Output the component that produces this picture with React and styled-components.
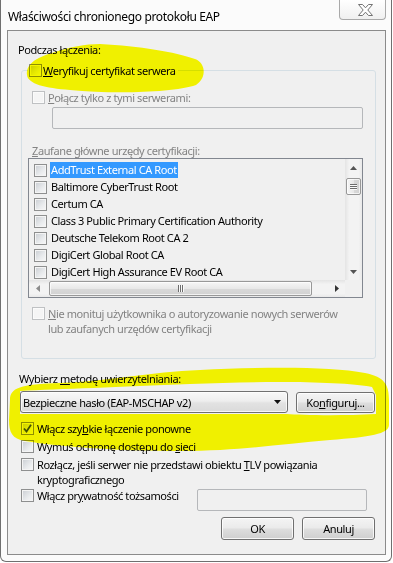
import React from "react";
import styled, { createGlobalStyle } from "styled-components";

const GlobalStyle = createGlobalStyle`
  html, body {
    margin: 0;
    padding: 0;
    background: #ffffff;
  }
  body {
    font-family: "Noto Sans", "Open Sans", sans-serif;
    font-size: 11px;
    letter-spacing: -0.4px;
    color: #000;
  }
`;

const Window = styled.div`
  position: relative;
  width: 392px;
  box-sizing: border-box;
  display: flex;
  flex-direction: column;
  background: #fbfbfb;
  border: 1px solid #6f6f6f;
  border-top: none;
  border-radius: 0 0 6px 6px;
  padding: 0 5px 6px 6px;
`;

const TitleBar = styled.div`
  height: 30px;
  display: flex;
  justify-content: space-between;
  align-items: flex-start;
`;

const Title = styled.div`
  padding: 9px 0 0 1px;
  font-size: 12px;
  line-height: 15px;
  letter-spacing: -0.35px;
`;

const CloseButton = styled.div`
  width: 47px;
  height: 20px;
  box-sizing: border-box;
  display: flex;
  align-items: center;
  justify-content: center;
  padding-left: 6px;
  border: 1px solid #a9a9a9;
  border-top: none;
  border-radius: 0 0 4px 4px;
  background: linear-gradient(#ffffff, #f0f0f0);
`;

const Client = styled.div`
  display: flex;
  flex-direction: column;
  border: 1px solid #8b8b8b;
  background: #f0f0f0;
  padding: 11px 9px 14px 10px;
`;

const Label = styled.div`
  line-height: 15px;
  white-space: nowrap;
  margin: ${(p) => p.$mt || 0}px 0 0 ${(p) => p.$ml || 0}px;
  color: ${(p) => (p.$disabled ? "#838383" : "#000")};
`;

const Key = styled.span`
  text-decoration: underline;
  text-underline-offset: 1px;
`;

const Group = styled.fieldset`
  margin: 6px 0 0 3px;
  padding: 12px 12px 22px 6px;
  border: 1px solid #d5dfe5;
  border-radius: 3px;
  min-width: 0;
`;

const Legend = styled.legend`
  margin: 0;
  padding: 0 2px 0 1px;
`;

const CheckRow = styled.div`
  display: flex;
  align-items: flex-start;
  gap: ${(p) => p.$gap ?? 3}px;
  line-height: ${(p) => p.$lh}px;
  white-space: nowrap;
  margin: ${(p) => p.$mt || 0}px 0 0 ${(p) => p.$ml || 0}px;
  color: ${(p) => (p.$disabled ? "#838383" : "#000")};
`;

const Box = styled.span`
  flex: none;
  display: flex;
  align-items: center;
  justify-content: center;
  width: 13px;
  height: 13px;
  box-sizing: border-box;
  margin-top: ${(p) => p.$offset}px;
  border: 1px solid ${(p) => (p.$disabled ? "#bfc1c3" : "#8e8f8f")};
  background: ${(p) =>
    p.$disabled
      ? "#f5f5f5"
      : "linear-gradient(135deg, #c9cdd2 0%, #e9ebed 60%, #f8f8f8 100%)"};
  box-shadow: inset 0 0 0 1px ${(p) => (p.$disabled ? "#fbfbfb" : "#f4f4f4")};
`;

const Field = styled.div`
  flex: none;
  width: ${(p) => p.$w}px;
  height: 22px;
  box-sizing: border-box;
  margin: ${(p) => p.$margin};
  border: 1px solid #b5b7ba;
  border-radius: 2px;
  background: #f0f0f0;
`;

const ListBox = styled.div`
  display: grid;
  grid-template-columns: 1fr 17px;
  grid-template-rows: 1fr 17px;
  height: 140px;
  box-sizing: border-box;
  border: 1px solid #828790;
  background: #f0f0f0;
`;

const Items = styled.div`
  padding: 2px 0 0 5px;
  overflow: hidden;
`;

const Item = styled.div`
  display: flex;
  align-items: center;
  gap: 3px;
  height: 17px;
  white-space: nowrap;
`;

const ItemText = styled.span`
  padding: 0 1px;
  line-height: 16px;
  background: ${(p) => (p.$selected ? "#3399ff" : "transparent")};
  color: ${(p) => (p.$selected ? "#ffffff" : "#000")};
`;

const VScroll = styled.div`
  display: flex;
  flex-direction: column;
  align-items: center;
  background: linear-gradient(to right, #e4e4e4, #f3f3f3 25%, #f3f3f3 80%, #e9e9e9);
`;

const HScroll = styled.div`
  display: flex;
  align-items: center;
  background: linear-gradient(#e4e4e4, #f3f3f3 25%, #f3f3f3 80%, #e9e9e9);
`;

const Corner = styled.div`
  background: #f0f0f0;
`;

const ArrowCell = styled.div`
  flex: none;
  width: 17px;
  height: 17px;
  display: flex;
  align-items: center;
  justify-content: center;
  margin-top: ${(p) => (p.$end ? "auto" : "0")};
  margin-left: ${(p) => (p.$push ? "auto" : "0")};
`;

const Thumb = styled.div`
  flex: none;
  box-sizing: border-box;
  display: flex;
  flex-direction: ${(p) => (p.$horizontal ? "row" : "column")};
  align-items: center;
  justify-content: center;
  gap: 1px;
  width: ${(p) => (p.$horizontal ? "263px" : "15px")};
  height: ${(p) => (p.$horizontal ? "15px" : "17px")};
  margin: ${(p) => (p.$horizontal ? "0 0 0 3px" : "2px 0 0 0")};
  border: 1px solid #989898;
  border-radius: 2px;
  background: ${(p) =>
    p.$horizontal
      ? "linear-gradient(#f6f6f6, #e8e8e8 50%, #d9d9d9 51%, #d2d2d2)"
      : "linear-gradient(to right, #f6f6f6, #e8e8e8 50%, #d9d9d9 51%, #d2d2d2)"};
  box-shadow: inset 0 0 0 1px rgba(255, 255, 255, 0.7);
`;

const Grip = styled.span`
  flex: none;
  width: ${(p) => (p.$horizontal ? "1px" : "7px")};
  height: ${(p) => (p.$horizontal ? "7px" : "1px")};
  background: #6d6d6d;
  box-shadow: ${(p) => (p.$horizontal ? "1px 0 0 #fafafa" : "0 1px 0 #fafafa")};
`;

const MethodRow = styled.div`
  display: flex;
  align-items: center;
  margin: 5px 0 0 2px;
`;

const Combo = styled.div`
  width: 268px;
  height: 22px;
  box-sizing: border-box;
  display: flex;
  align-items: center;
  padding: 0 6px 0 2px;
  border: 1px solid #707070;
  border-radius: 3px;
  background: linear-gradient(#f8f8f8, #eeeeee 45%, #e2e2e2 55%, #dadada);
  box-shadow: inset 0 0 0 1px rgba(255, 255, 255, 0.75);
  line-height: 15px;
`;

const ComboText = styled.span`
  flex: 1;
  white-space: nowrap;
`;

const Button = styled.div`
  flex: none;
  width: ${(p) => p.$w}px;
  height: ${(p) => p.$h}px;
  box-sizing: border-box;
  margin-left: ${(p) => p.$ml || 0}px;
  display: flex;
  align-items: center;
  justify-content: center;
  border: 1px solid #707070;
  border-radius: 3px;
  background: linear-gradient(#f4f4f4, #ebebeb 45%, #dddddd 55%, #cfcfcf);
  box-shadow: inset 0 0 0 1px rgba(255, 255, 255, 0.8);
  line-height: 15px;
  white-space: nowrap;
`;

const Options = styled.div`
  display: flex;
  flex-direction: column;
  margin: 9px 0 0 3px;
`;

const OptionLine = styled.div`
  display: flex;
  align-items: flex-start;
  margin-top: ${(p) => p.$mt || 0}px;
`;

const Footer = styled.div`
  display: flex;
  justify-content: flex-end;
  gap: 8px;
  margin-top: 6px;
  padding-right: 1px;
`;

const Marker = styled.svg`
  position: absolute;
  left: -1px;
  top: 0;
  width: 392px;
  height: 562px;
  pointer-events: none;
  mix-blend-mode: multiply;
`;

const certificates = [
  "AddTrust External CA Root",
  "Baltimore CyberTrust Root",
  "Certum CA",
  "Class 3 Public Primary Certification Authority",
  "Deutsche Telekom Root CA 2",
  "DigiCert Global Root CA",
  "DigiCert High Assurance EV Root CA",
];

const Arrow = ({ dir, color = "#555" }) => {
  const shapes = {
    up: ["7", "4", "0,4 3.5,0 7,4"],
    down: ["7", "4", "0,0 7,0 3.5,4"],
    left: ["4", "7", "4,0 4,7 0,3.5"],
    right: ["4", "7", "0,0 4,3.5 0,7"],
  };
  const [w, h, pts] = shapes[dir];
  return (
    <svg width={w} height={h} viewBox={`0 0 ${w} ${h}`}>
      <polygon points={pts} fill={color} />
    </svg>
  );
};

const Check = ({ checked, disabled, lh }) => (
  <Box $disabled={disabled} $offset={Math.min(lh - 13, 2) / 2}>
    {checked && (
      <svg width="9" height="9" viewBox="0 0 9 9">
        <path d="M1 4.5 L3.5 7.5 L8 0.8" fill="none" stroke="#42526a" strokeWidth="1.8" />
      </svg>
    )}
  </Box>
);

const CheckOption = ({ children, checked, disabled, lh = 15, gap, mt, ml }) => (
  <CheckRow $lh={lh} $gap={gap} $mt={mt} $ml={ml} $disabled={disabled}>
    <Check checked={checked} disabled={disabled} lh={lh} />
    <span>{children}</span>
  </CheckRow>
);

const App = () => {
  return (
    <>
      <GlobalStyle />
      <Window>
        <TitleBar>
          <Title>Właściwości chronionego protokołu EAP</Title>
          <CloseButton>
            <svg width="15" height="12" viewBox="0 0 15 12">
              <polygon
                points="0.5,0.5 4.5,0.5 7.5,3.8 10.5,0.5 14.5,0.5 9.8,6 14.5,11.5 10.5,11.5 7.5,8.2 4.5,11.5 0.5,11.5 5.2,6"
                fill="#ffffff"
                stroke="#737373"
              />
            </svg>
          </CloseButton>
        </TitleBar>

        <Client>
          <Label>Podczas łączenia:</Label>

          <Group>
            <Legend>
              <CheckOption gap={1}>
                <Key>W</Key>eryfikuj certyfikat serwera
              </CheckOption>
            </Legend>

            <CheckOption disabled ml={4}>
              <Key>P</Key>ołącz tylko z tymi serwerami:
            </CheckOption>
            <Field $w={311} $margin="2px 0 0 24px" />

            <Label $mt={14} $ml={4} $disabled>
              <Key>Z</Key>aufane główne urzędy certyfikacji:
            </Label>

            <ListBox>
              <Items>
                {certificates.map((name, i) => (
                  <Item key={name}>
                    <Check lh={17} />
                    <ItemText $selected={i === 0}>{name}</ItemText>
                  </Item>
                ))}
              </Items>
              <VScroll>
                <ArrowCell>
                  <Arrow dir="up" />
                </ArrowCell>
                <Thumb>
                  <Grip />
                  <Grip />
                  <Grip />
                </Thumb>
                <ArrowCell $end>
                  <Arrow dir="down" />
                </ArrowCell>
              </VScroll>
              <HScroll>
                <ArrowCell>
                  <Arrow dir="left" color="#8c8c8c" />
                </ArrowCell>
                <Thumb $horizontal>
                  <Grip $horizontal />
                  <Grip $horizontal />
                  <Grip $horizontal />
                </Thumb>
                <ArrowCell $push>
                  <Arrow dir="right" color="#333" />
                </ArrowCell>
              </HScroll>
              <Corner />
            </ListBox>

            <CheckOption disabled mt={8} ml={4}>
              <Key>N</Key>ie monituj użytkownika o autoryzowanie nowych serwerów
              <br />
              lub zaufanych urzędów certyfikacji
            </CheckOption>
          </Group>

          <Label $mt={12} $ml={1}>
            Wybierz <Key>m</Key>etodę uwierzytelniania:
          </Label>

          <MethodRow>
            <Combo>
              <ComboText>Bezpieczne hasło (EAP-MSCHAP v2)</ComboText>
              <Arrow dir="down" color="#111" />
            </Combo>
            <Button $w={79} $h={21} $ml={8}>
              Ko<Key>n</Key>figuruj...
            </Button>
          </MethodRow>

          <Options>
            <CheckOption checked lh={13}>
              Włącz szy<Key>b</Key>kie łączenie ponowne
            </CheckOption>
            <CheckOption lh={13} mt={5}>
              Wymuś ochronę dostępu do <Key>s</Key>ieci
            </CheckOption>
            <CheckOption mt={4}>
              Rozłącz, jeśli serwer nie przedstawi obiektu <Key>T</Key>LV powiązania
              <br />
              kryptograficznego
            </CheckOption>
            <OptionLine $mt={2}>
              <CheckOption lh={13}>
                Włącz pr<Key>y</Key>watność tożsamości
              </CheckOption>
              <Field $w={170} $margin="0 9px 0 auto" />
            </OptionLine>
          </Options>

          <Footer>
            <Button $w={73} $h={23}>
              OK
            </Button>
            <Button $w={73} $h={23}>
              Anuluj
            </Button>
          </Footer>
        </Client>

        <Marker viewBox="0 0 392 562">
          <path
            fill="#ffff00"
            d="M100 44 C140 46 175 52 195 59 C206 63 207 78 196 85 C172 93 112 94 70 90 C45 88 28 84 27 75 C26 65 34 58 55 52 C70 47 85 44 100 44 Z"
          />
          <path
            fill="#ffff00"
            fillRule="evenodd"
            d="M10 400 C10 388 20 384 60 383 C110 381 150 372 200 370 C260 367 330 366 365 373 C385 377 389 385 389 400 L389 425 C389 434 370 437 330 440 C280 444 240 451 180 451 C120 451 60 447 25 441 C12 439 9 432 9 420 Z M20 391 C60 389 120 387 190 384 C260 381 340 381 372 387 L376 395 L376 414 C340 416 300 415 287 414 L20 414 Z"
          />
        </Marker>
      </Window>
    </>
  );
};

export default App;
